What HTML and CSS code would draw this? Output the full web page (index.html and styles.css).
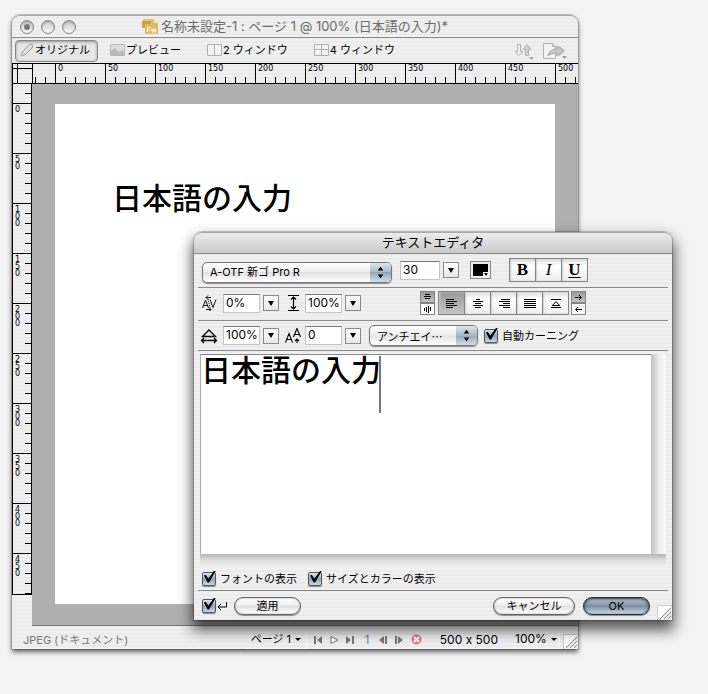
FILE: index.html
```html
<!DOCTYPE html>
<html lang="ja">
<head>
<meta charset="utf-8">
<title>名称未設定-1</title>
<link rel="stylesheet" href="styles.css">
</head>
<body>
<main class="desktop">
  <section class="window document">
    <header class="titlebar">
      <div class="lights">
        <button class="light light-dirty" aria-label="閉じる"></button>
        <button class="light" aria-label="しまう"></button>
        <button class="light" aria-label="拡大"></button>
      </div>
      <h1 class="title">
        <svg width="17" height="17" viewBox="0 0 17 17"><path d="M3 1h9l4 4v11H3z" fill="#dcbb66"/><path d="M0 3h9v3H3v4H0z" fill="#c9a242"/><path d="M1 1h12v2H1z" fill="#e3c478"/><path d="M12 1v4h4z" fill="#fff0b8"/><path d="M5.500 14V9.500H8.500M5.500 12h2.500M9.500 11l1 3 1.200-3 1.200 3 1.100-3" fill="none" stroke="#fff6d8" stroke-width="1.200"/></svg>
        <span>名称未設定-1 : ページ 1 @ 100% (日本語の入力)*</span>
      </h1>
    </header>

    <nav class="toolbar">
      <button class="tool tool-on">
        <svg width="16" height="16" viewBox="0 0 16 16"><path d="M2 14l1-4 8-8q3 0 3 3l-8 8z" fill="#d6d6d6" stroke="#a6a6a6"/><path d="M5 11l7-7" stroke="#f4f4f4"/></svg>
        <span>オリジナル</span>
      </button>
      <button class="tool">
        <svg width="16" height="16" viewBox="0 0 16 16"><path d="M.5 2.500h14v11H.5z" fill="#dedede" stroke="#b8b8b8"/><path d="M1 9l4-3 4 4 3-2 2 2v3H1z" fill="#bababa"/></svg>
        <span>プレビュー</span>
      </button>
      <button class="tool">
        <svg width="16" height="16" viewBox="0 0 16 16"><path d="M.5 2.500h14v11H.5zM7.500 3v10" fill="#f3f3f3" stroke="#b0b0b0"/></svg>
        <span>2 ウィンドウ</span>
      </button>
      <button class="tool">
        <svg width="16" height="16" viewBox="0 0 16 16"><path d="M.5 2.500h14v11H.5zM7.500 3v10M1 7.500h13" fill="#f3f3f3" stroke="#b0b0b0"/></svg>
        <span>4 ウィンドウ</span>
      </button>
      <span class="spacer"></span>
      <button class="tool-icon" aria-label="ファイル管理">
        <svg width="22" height="18" viewBox="0 0 22 18"><path d="M3.500 2.500h3v7h2.500l-4 4-4-4h2.500z" fill="#ededed" stroke="#b2b2b2"/><path d="M11.500 13.500h3v-6H17l-4-5-4 5h2.500z" fill="#cdcdcd" stroke="#b2b2b2"/><path d="M15 15h5l-2.500 3z" fill="#a8a8a8"/></svg>
      </button>
      <button class="tool-icon" aria-label="クイック書き出し">
        <svg width="26" height="18" viewBox="0 0 26 18"><path d="M1.500 1.500h9l3 3v12h-12z" fill="#f2f2f2" stroke="#b2b2b2"/><path d="M10.500 1.500v3h3" fill="none" stroke="#b2b2b2"/><path d="M6 14c1-4 3-7 9-7V4l6 5-6 5v-3c-4 0-7 1-9 3z" fill="#c9c9c9" stroke="#a9a9a9"/><path d="M17 4.500L22 9l-5 4.500" fill="none" stroke="#b4b4b4" stroke-width="1.500"/><path d="M20 14h5l-2.500 3z" fill="#9b9b9b"/></svg>
      </button>
    </nav>

    <div class="ruler-x">
      <i class="corner"></i>
      <i class="seg lead"></i>
      <span class="seg">0</span><span class="seg">50</span><span class="seg">100</span><span class="seg">150</span><span class="seg">200</span><span class="seg">250</span><span class="seg">300</span><span class="seg">350</span><span class="seg">400</span><span class="seg">450</span><span class="seg">500</span>
    </div>

    <div class="workspace">
      <div class="gutter">
        <div class="ruler-y">
          <i class="vseg vlead"></i>
          <span class="vseg"><b>0</b></span><span class="vseg"><b>50</b></span><span class="vseg"><b>100</b></span><span class="vseg"><b>150</b></span><span class="vseg"><b>200</b></span><span class="vseg"><b>250</b></span><span class="vseg"><b>300</b></span><span class="vseg"><b>350</b></span><span class="vseg"><b>400</b></span><span class="vseg vlast"><b>450</b></span>
        </div>
      </div>
      <div class="canvas">
        <div class="paper"><p class="headline">日本語の入力</p></div>
      </div>
    </div>

    <footer class="status">
      <span class="kind">JPEG (ドキュメント)</span>
      <span class="spacer"></span>
      <button class="status-menu page-menu">ページ 1<i class="caret-down"></i></button>
      <div class="player">
        <button aria-label="最初のフレーム"><svg width="9" height="8" viewBox="0 0 9 8"><path d="M0 0h2v8H0zM8 0v8L3 4z" fill="#777"/></svg></button>
        <button aria-label="再生"><svg width="9" height="8" viewBox="0 0 9 8"><path d="M1 .5L8 4 1 7.500z" fill="#fff" stroke="#777"/></svg></button>
        <button aria-label="最後のフレーム"><svg width="9" height="8" viewBox="0 0 9 8"><path d="M6 0h2v8H6zM0 0v8l5-4z" fill="#777"/></svg></button>
        <span class="frame">1</span>
        <button aria-label="前のフレーム"><svg width="9" height="8" viewBox="0 0 9 8"><path d="M5 0v8L0 4zM6 0h2v8H6z" fill="#777"/></svg></button>
        <button aria-label="次のフレーム"><svg width="9" height="8" viewBox="0 0 9 8"><path d="M0 0h2v8H0zM3 0v8l5-4z" fill="#777"/></svg></button>
        <button aria-label="停止"><svg width="11" height="11" viewBox="0 0 11 11"><circle cx="5.500" cy="5.500" r="5" fill="#e27878"/><path d="M3 3l5 5M8 3l-5 5" stroke="#fff" stroke-width="2"/></svg></button>
      </div>
      <span class="size">500 x 500</span>
      <button class="status-menu zoom-menu">100%<i class="caret-down"></i></button>
      <svg class="grip" width="15" height="15" viewBox="0 0 15 15"><path d="M.5 15V.5H15" fill="#fff" stroke="#ccc"/><path d="M3 14L14 3M7 14l7-7M11 14l3-3" stroke="#888"/></svg>
    </footer>
  </section>

  <section class="window editor">
    <header class="editor-title"><h2>テキストエディタ</h2></header>

    <div class="row row-font">
      <div class="popup popup-font">
        <select aria-label="フォント"><option>A-OTF 新ゴ Pro R</option></select>
        <svg width="21" height="20" viewBox="0 0 21 20"><path d="M10.500 4l3 4h-6zM10.500 16l3-4h-6z"/></svg>
      </div>
      <div class="combo">
        <input class="field field-size" aria-label="サイズ" value="30">
        <button class="drop" aria-label="サイズの選択"><i></i></button>
      </div>
      <button class="swatch" aria-label="カラー"><svg width="17" height="14" viewBox="0 0 17 14"><path d="M1 1h15v12H1z"/><path d="M11 9h6v5h-6z" fill="#fff"/><path d="M12 10h4l-2 3z"/></svg></button>
      <div class="group style-group">
        <button class="cell" aria-label="ボールド"><b>B</b></button><button class="cell" aria-label="イタリック"><em>I</em></button><button class="cell" aria-label="下線"><u>U</u></button>
      </div>
    </div>

    <div class="row row-metrics">
      <label class="metric" for="kerning"><svg width="16" height="16" viewBox="0 0 16 16"><path d="M1.500 13l3-8 3 8M2.500 10.500h4M9 4.500l3 8 3-8M5 2.500h5M7 .5l-2 2 2 2M5 14.500h5M8 12.500l2 2-2 2" fill="none" stroke="#111"/><path d="M7 4l2 9" stroke="#111" stroke-dasharray="1 1"/></svg></label>
      <div class="combo"><input class="field" id="kerning" value="0%"><button class="drop" aria-label="カーニングの選択"><i></i></button></div>
      <label class="metric" for="leading"><svg width="16" height="16" viewBox="0 0 16 16"><path d="M3 .5h11M3 15.500h11M8.500 2v12M6 4.500L8.500 2 11 4.500M6 11.500L8.500 14l2.500-2.500" fill="none" stroke="#000" stroke-width="1.200"/></svg></label>
      <div class="combo"><input class="field" id="leading" value="100%"><button class="drop" aria-label="行間の選択"><i></i></button></div>
      <div class="align-groups">
        <div class="stack">
          <button class="mini on" aria-label="横書き"><svg width="9" height="8" viewBox="0 0 9 8"><path d="M2 1.500h5M1 3.500h7M2 5.500h5" stroke="#000"/></svg></button><button class="mini" aria-label="縦書き"><svg width="9" height="8" viewBox="0 0 9 8"><path d="M1.500 3v3M3.500 2v5M5.500 1v7M7.500 2v4" stroke="#000"/></svg></button>
        </div>
        <div class="group">
          <button class="cell on" aria-label="左揃え"><svg width="12" height="11" viewBox="0 0 12 11"><path d="M0 1.500h8M0 3.500h11M0 5.500h8M0 7.500h11M0 9.500h7" stroke="#000"/></svg></button><button class="cell" aria-label="中央揃え"><svg width="12" height="11" viewBox="0 0 12 11"><path d="M4 1.500h4M1 3.500h10M3 5.500h6M1 7.500h10M3 9.500h6" stroke="#000"/></svg></button><button class="cell" aria-label="右揃え"><svg width="12" height="11" viewBox="0 0 12 11"><path d="M3 1.500h9M1 3.500h11M5 5.500h7M1 7.500h11M5 9.500h7" stroke="#000"/></svg></button><button class="cell" aria-label="両端揃え"><svg width="12" height="11" viewBox="0 0 12 11"><path d="M0 1.500h12M0 3.500h12M0 5.500h12M0 7.500h12M0 9.500h12" stroke="#000"/></svg></button><button class="cell" aria-label="幅に合わせる"><svg width="12" height="11" viewBox="0 0 12 11"><path d="M1 1.500h10M1 9.500h10M2 8l4-4.500L10 8M3 7.500h6" fill="none" stroke="#000"/></svg></button>
        </div>
        <div class="stack">
          <button class="mini on" aria-label="左から右"><svg width="9" height="8" viewBox="0 0 9 8"><path d="M1 4.500h6M5 2L7.500 4.500 5 7" fill="none" stroke="#000"/></svg></button><button class="mini" aria-label="右から左"><svg width="9" height="8" viewBox="0 0 9 8"><path d="M8 4.500H2M4 2L1.500 4.500 4 7" fill="none" stroke="#000"/></svg></button>
        </div>
      </div>
    </div>

    <div class="row row-scale">
      <label class="metric" for="hscale"><svg width="18" height="16" viewBox="0 0 18 16"><path d="M2.500 8.500L9 2l6.500 6.500zM1.500 12.500h15M4 10l-2.500 2.500L4 15M14 10l2.500 2.500L14 15" fill="none" stroke="#000" stroke-width="1.300"/></svg></label>
      <div class="combo"><input class="field" id="hscale" value="100%"><button class="drop" aria-label="水平比率の選択"><i></i></button></div>
      <label class="metric" for="baseline"><svg width="16" height="16" viewBox="0 0 16 16"><path d="M.5 14.500l3.500-9 3.500 9M2 11.500h4M8.500 9L12 .5 15.500 9M9.500 6.500h5M12 15v-4M10 13l2-2 2 2" fill="none" stroke="#000" stroke-width="1.100"/></svg></label>
      <div class="combo"><input class="field" id="baseline" value="0"><button class="drop" aria-label="ベースラインの選択"><i></i></button></div>
      <div class="popup popup-alias">
        <select aria-label="アンチエイリアス"><option>アンチエイ…</option></select>
        <svg width="21" height="20" viewBox="0 0 21 20"><path d="M10.500 4l3 4h-6zM10.500 16l3-4h-6z"/></svg>
      </div>
      <label class="check"><input type="checkbox" checked>自動カーニング</label>
    </div>

    <div class="edit-area">
      <textarea class="edit-text" aria-label="テキスト" spellcheck="false">日本語の入力</textarea>
      <i class="insertion"></i>
      <i class="track-y"></i>
      <i class="track-x"></i>
    </div>

    <div class="row row-show">
      <label class="check"><input type="checkbox" checked>フォントの表示</label>
      <label class="check"><input type="checkbox" checked>サイズとカラーの表示</label>
    </div>

    <div class="row row-actions">
      <label class="check check-return"><input type="checkbox" checked aria-label="自動適用"><svg width="11" height="10" viewBox="0 0 11 10"><path d="M9.500 1v5h-8M4 3L1 6l3 3" fill="none" stroke="#000"/></svg></label>
      <button class="push">適用</button>
      <span class="spacer"></span>
      <button class="push push-wide">キャンセル</button>
      <button class="push push-default">OK</button>
      <svg class="grip" width="15" height="15" viewBox="0 0 15 15"><path d="M.5 15V.5H15" fill="#fff" stroke="#ccc"/><path d="M3 14L14 3M7 14l7-7M11 14l3-3" stroke="#888"/></svg>
    </div>
  </section>
</main>
</body>
</html>
```
FILE: styles.css
```css
:root {
  --stripes: repeating-linear-gradient(#f0f0f0 0 2px, #ebebeb 2px 4px);
  --ui: Inter, "Noto Sans CJK JP", sans-serif;
}

* { box-sizing: border-box; }

body {
  margin: 0;
  background: #f3f3f3;
  font: 11px/16px var(--ui);
  font-feature-settings: "calt" 0;
  color: #000;
}

button, input, select, textarea { font: inherit; font-feature-settings: inherit; color: inherit; margin: 0; }
button { padding: 0; border: 0; background: none; display: flex; align-items: center; justify-content: center; }
h1, h2, p { margin: 0; font-weight: 400; }
svg { display: block; flex: none; }
i { font-style: normal; }

.desktop { position: relative; min-height: 100vh; overflow: hidden; }
.window { position: absolute; background: var(--stripes); }
.spacer { flex: 1; }

/* Document window */
.document {
  left: 12px;
  right: 130px;
  top: 15px;
  border-radius: 8px 8px 0 0;
  box-shadow: 0 0 0 1px rgba(0, 0, 0, .18), 0 3px 5px rgba(0, 0, 0, .6);
}
.titlebar {
  display: grid;
  grid-template-columns: 1fr auto 1fr;
  align-items: center;
  height: 23px;
  padding: 0 8px;
  border-top: 1px solid #aaa;
  border-bottom: 1px solid #8c8c8c;
  border-radius: 8px 8px 0 0;
}
.lights { display: flex; gap: 7px; }
.light {
  width: 14px;
  height: 14px;
  border: 1px solid #858585;
  border-radius: 50%;
  background: linear-gradient(#c9c9c9, #fafafa);
  box-shadow: inset 0 1px 2px rgba(0, 0, 0, .25);
}
.light-dirty::before { content: ""; width: 6px; height: 6px; border-radius: 50%; background: #777; }
.title { display: flex; align-items: center; gap: 2px; font-size: 13px; line-height: 18px; color: #6c6c6c; white-space: nowrap; }
.title span { padding-bottom: 2px; }

.toolbar { display: flex; align-items: center; height: 25px; padding: 0 10px 0 3px; }
.tool { height: 22px; padding: 0 11px 1px 4px; white-space: nowrap; }
.tool + .tool { margin-left: 8px; }
.tool + .tool + .tool { margin-left: 11px; }
.tool-on {
  padding: 0 7px 1px 3px;
  border: 1px solid #888;
  border-radius: 4px;
  background: #e6e6e6;
  box-shadow: inset 0 1px 3px rgba(0, 0, 0, .35);
}
.tool-icon + .tool-icon { margin-left: 6px; }

.ruler-x {
  display: flex;
  height: 21px;
  border: solid #000;
  border-width: 1px 0;
  overflow: hidden;
  font: 8px/10px "DejaVu Sans", sans-serif;
}
.corner {
  flex: none;
  width: 21px;
  border: solid #000;
  border-width: 0 1px;
  background:
    linear-gradient(#000, #000) 4px 0 / 1px 100% no-repeat,
    linear-gradient(#000, #000) 0 4px / 100% 1px no-repeat;
}
.seg {
  flex: none;
  width: 50px;
  padding-left: 3px;
  background:
    linear-gradient(#000, #000) 0 0 / 1px 100% no-repeat,
    repeating-linear-gradient(to right, #000 0 1px, transparent 1px 10px) 0 100% / 100% 6px no-repeat;
}
.lead {
  width: 22px;
  background: repeating-linear-gradient(to right, #000 0 1px, transparent 1px 10px) 2px 100% / 100% 6px no-repeat;
}

.workspace { display: flex; }
.gutter { flex: none; width: 20px; }
.ruler-y {
  border: solid #000;
  border-width: 0 1px 1px;
  font: 8px/7px "DejaVu Sans", sans-serif;
}
.vseg {
  display: block;
  height: 50px;
  padding: 3px 0 0 2px;
  background:
    linear-gradient(#000, #000) 0 0 / 100% 1px no-repeat,
    repeating-linear-gradient(#000 0 1px, transparent 1px 10px) 100% 0 / 6px 100% no-repeat;
}
.vseg b { display: block; width: 5px; font-weight: 400; word-break: break-all; }
.vlead {
  height: 19px;
  background: linear-gradient(#000, #000) 100% 9px / 6px 1px no-repeat;
}
.vlast { height: 41px; }

.canvas { display: flex; flex: 1; padding: 20px 23px 21px; background: #b0b0b0; border-bottom: 1px solid #777; }
.paper { flex: 1; min-height: 500px; padding: 72px 57px; background: #fff; }
.headline { font-size: 30px; line-height: 44px; font-weight: 500; white-space: nowrap; }

.status { display: flex; align-items: center; height: 23px; padding-left: 11px; white-space: nowrap; }
.kind { color: #777; }
.status-menu { gap: 4px; height: 18px; padding: 0 4px; border: solid #fafafa; border-width: 0 1px 1px 0; }
.page-menu { width: 61px; }
.zoom-menu { width: 47px; font-size: 12px; }
.status > :not(.grip) { margin-top: 4px; }
.caret-down { border: solid transparent; border-width: 3px 3px 0; border-top-color: #000; }
.player { display: flex; align-items: center; gap: 7px; padding-left: 7px; }
.frame { width: 10px; text-align: center; font-size: 12px; color: #5d86a8; }
.size { padding: 0 15px 0 18px; font-size: 12px; }
.grip { align-self: flex-end; }
.status .grip { margin-left: 3px; }

/* Text editor dialog */
.editor {
  left: 194px;
  right: 36px;
  top: 232px;
  border-radius: 8px 8px 0 0;
  box-shadow: 0 0 0 1px rgba(0, 0, 0, .2), 0 8px 14px 2px rgba(0, 0, 0, .65);
}
.editor-title {
  height: 22px;
  border-top: 1px solid #aaa;
  border-bottom: 1px solid #888;
  border-radius: 8px 8px 0 0;
  background: linear-gradient(#ececec, #c9c9c9);
  text-align: center;
}
.editor-title h2 { font-size: 13px; line-height: 18px; }

.row { display: flex; align-items: center; margin: 0 4px; padding: 0 4px; border-bottom: 1px solid #8c8c8c; white-space: nowrap; }
.row-font { height: 34px; padding-bottom: 1px; }
.row-metrics { height: 33px; padding-bottom: 2px; }
.row-scale { height: 30px; }

.popup { position: relative; height: 22px; }
.popup-font { width: 190px; margin: 5px 8px 0 0; }
.popup-alias { width: 109px; margin: 1px 6px 0 8px; font-family: "Noto Sans CJK JP", sans-serif; }
.popup select {
  appearance: none;
  width: 100%;
  height: 21px;
  padding: 0 22px 0 7px;
  border: 1px solid #777;
  border-radius: 5px;
  background: linear-gradient(#fff, #ececec 50%, #e2e2e2 50%, #fff);
  box-shadow: 0 1px 1px rgba(0, 0, 0, .4);
}
.popup svg {
  position: absolute;
  top: 1px;
  right: 1px;
  height: 19px;
  border-radius: 0 4px 4px 0;
  background: linear-gradient(#dfe5ed, #a9b6c8 50%, #94a4b9 50%, #d3deea);
}

.combo { display: flex; align-items: center; gap: 3px; }
.field {
  width: 37px;
  height: 19px;
  padding: 0 0 2px 2px;
  border: 1px solid #c4c4c4;
  border-top-color: #777;
  background: #fff;
  font-size: 12px;
}
.field-size { width: 40px; }
.drop { width: 16px; height: 16px; border: 1px solid #8a8a8a; background: linear-gradient(#fff, #e6e6e6); }
.drop i { border: solid transparent; border-width: 5px 3px 0; border-top-color: #000; }
.swatch { width: 21px; height: 18px; margin-left: 11px; border: 1px solid #888; background: #eee; }
.metric { display: flex; justify-content: center; width: 20px; margin-right: 2px; }
.combo + .metric { margin-left: 4px; }
.row-metrics .metric:first-child, .row-scale .metric:first-child { margin-left: -3px; margin-right: 4px; }

.group { display: flex; }
.style-group { margin-left: 18px; font: 17px/20px "Liberation Serif", serif; }
.style-group u { font-weight: 700; text-decoration-thickness: 1px; text-underline-offset: 2px; }
.cell { width: 27px; height: 24px; margin-right: -1px; border: 1px solid #858585; background: linear-gradient(#ddd, #fff 30%, #eee); box-shadow: inset 1px 0 2px #ccc; }
.cell.on, .mini.on { background: linear-gradient(#999, #c4c4c4); }
.align-groups { display: flex; gap: 3px; margin-left: 59px; }
.mini { width: 15px; height: 12px; border: 1px solid #858585; background: #f8f8f8; }

.check { display: flex; align-items: center; gap: 4px; }
.check input {
  position: relative;
  appearance: none;
  width: 14px;
  height: 14px;
  border: 1px solid #555;
  border-radius: 2px;
  background: linear-gradient(#dfe7f0, #8fa3ba 50%, #c8d8e8);
  box-shadow: 0 1px 1px rgba(0, 0, 0, .4);
}
.check input:checked::before {
  content: "";
  position: absolute;
  inset: -2px -1px 2px 1px;
  background: #000;
  clip-path: polygon(0 42%, 14% 36%, 36% 68%, 86% 0, 100% 0, 42% 100%, 30% 100%);
}

.edit-area {
  position: relative;
  display: grid;
  grid-template-columns: 1fr 15px;
  grid-template-rows: 200px 16px;
  margin: 3px 6px 0;
}
.edit-text {
  display: block;
  width: 100%;
  height: 100%;
  padding: 0;
  border: 1px solid #aaa;
  border-top-color: #888;
  border-width: 1px 0 0 1px;
  background: #fff;
  resize: none;
  overflow: hidden;
  font-size: 30px;
  font-weight: 500;
  line-height: 30px;
}
.insertion { position: absolute; left: 179px; top: 2px; width: 2px; height: 57px; background: #777; }
.track-y { background: linear-gradient(to right, #c0c0c0, #f0f0f0 60%, #fafafa); }
.track-x { grid-column: 1 / -1; background: linear-gradient(#b4b4b4, #e4e4e4 45%, #f2f2f2); }

.row-show { height: 21px; gap: 11px; padding-bottom: 3px; }
.row-actions { height: 29px; margin-right: 0; padding-right: 0; border-bottom: 0; }
.check-return { gap: 1px; margin-right: 6px; }
.push {
  width: 67px;
  height: 18px;
  border: 1px solid #666;
  border-radius: 9px;
  background: linear-gradient(#fff, #f0f0f0 45%, #e0e0e0 50%, #fff);
  box-shadow: 0 1px 1px rgba(0, 0, 0, .4), inset 0 0 2px #999;
}
.push-wide { width: 82px; margin-right: 8px; }
.push-default {
  margin-right: 7px;
  border-color: #222c38;
  background: linear-gradient(#c4ced9, #8796a7 45%, #7b8b9d 50%, #c6dcee);
  box-shadow: 0 1px 1px rgba(0, 0, 0, .4), inset 0 1px 3px #222c38;
}
```
